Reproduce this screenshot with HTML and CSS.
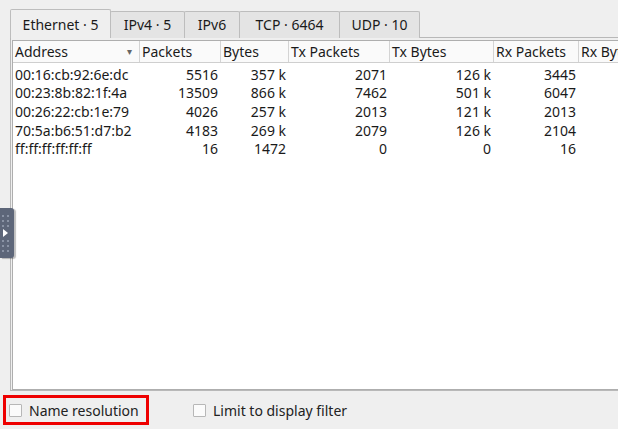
FILE: index.html
```html
<!DOCTYPE html>
<html>
<head>
<meta charset="utf-8">
<link rel="stylesheet" href="styles.css">
</head>
<body>
<div class="app">
  <div class="tabs">
    <div class="tab active">Ethernet · 5</div>
    <div class="tab w-ipv4">IPv4 · 5</div>
    <div class="tab w-ipv6">IPv6</div>
    <div class="tab w-tcp">TCP · 6464</div>
    <div class="tab w-udp">UDP · 10</div>
  </div>
  <div class="pane">
    <div class="view">
      <div class="row head">
        <div class="c c1">Address<span class="sort">▾</span></div>
        <div class="c c2">Packets</div>
        <div class="c c3">Bytes</div>
        <div class="c c4">Tx Packets</div>
        <div class="c c5">Tx Bytes</div>
        <div class="c c6">Rx Packets</div>
        <div class="c c7">Rx Bytes</div>
      </div>
      <div class="body">
        <div class="row"><div class="c c1">00:16:cb:92:6e:dc</div><div class="c c2 n">5516</div><div class="c c3 n">357 k</div><div class="c c4 n">2071</div><div class="c c5 n">126 k</div><div class="c c6 n">3445</div><div class="c c7 n">231 k</div></div>
        <div class="row"><div class="c c1">00:23:8b:82:1f:4a</div><div class="c c2 n">13509</div><div class="c c3 n">866 k</div><div class="c c4 n">7462</div><div class="c c5 n">501 k</div><div class="c c6 n">6047</div><div class="c c7 n">365 k</div></div>
        <div class="row"><div class="c c1">00:26:22:cb:1e:79</div><div class="c c2 n">4026</div><div class="c c3 n">257 k</div><div class="c c4 n">2013</div><div class="c c5 n">121 k</div><div class="c c6 n">2013</div><div class="c c7 n">136 k</div></div>
        <div class="row"><div class="c c1">70:5a:b6:51:d7:b2</div><div class="c c2 n">4183</div><div class="c c3 n">269 k</div><div class="c c4 n">2079</div><div class="c c5 n">126 k</div><div class="c c6 n">2104</div><div class="c c7 n">143 k</div></div>
        <div class="row"><div class="c c1">ff:ff:ff:ff:ff:ff</div><div class="c c2 n">16</div><div class="c c3 n">1472</div><div class="c c4 n">0</div><div class="c c5 n">0</div><div class="c c6 n">16</div><div class="c c7 n">1472</div></div>
      </div>
    </div>
  </div>
  <div class="handle">
    <svg width="14" height="50" viewBox="0 0 14 50">
      <g fill="#8a93a5">
        <rect x="2" y="7" width="2" height="2"/><rect x="7" y="7" width="2" height="2"/>
        <rect x="2" y="12" width="2" height="2"/><rect x="7" y="12" width="2" height="2"/>
        <rect x="2" y="17" width="2" height="2"/><rect x="7" y="17" width="2" height="2"/>
        <rect x="2" y="32" width="2" height="2"/><rect x="7" y="32" width="2" height="2"/>
        <rect x="2" y="37" width="2" height="2"/><rect x="7" y="37" width="2" height="2"/>
        <rect x="2" y="42" width="2" height="2"/><rect x="7" y="42" width="2" height="2"/>
      </g>
      <path d="M3 21 L8 25 L3 29 Z" fill="#ffffff"/>
    </svg>
  </div>
  <div class="bottom">
    <label class="check highlight"><span class="box"></span>Name resolution</label>
    <label class="check second"><span class="box"></span>Limit to display filter</label>
  </div>
</div>
</body>
</html>
```

FILE: styles.css
```css
html, body {
  margin: 0;
  padding: 0;
}
body {
  background: #efefef;
  font-family: "Noto Sans", "Open Sans", sans-serif;
  font-size: 14px;
  color: #1a1a1a;
  width: 618px;
  height: 429px;
  overflow: hidden;
}
.app {
  position: relative;
  width: 618px;
  height: 429px;
}
.tabs {
  display: flex;
  align-items: flex-end;
  padding: 8px 0 0 10px;
  height: 38px;
  box-sizing: border-box;
}
.tab {
  height: 27px;
  box-sizing: border-box;
  border: 1px solid #bdbdbd;
  border-bottom: none;
  background: #e4e4e4;
  border-radius: 2px 2px 0 0;
  display: flex;
  align-items: center;
  justify-content: center;
  margin-left: -1px;
  line-height: 1;
}
.tab.active {
  height: 29px;
  width: 101px;
  margin-left: 0;
  background: #efefef;
  position: relative;
  z-index: 1;
  padding-top: 2px;
}
.w-ipv4 { width: 75px; }
.w-ipv6 { width: 56px; }
.w-tcp { width: 101px; }
.w-udp { width: 81px; }
.pane {
  margin-left: 10px;
  margin-top: -1px;
  height: 354px;
  border: 1px solid #b8b8b8;
  border-right: none;
  box-sizing: border-box;
  padding: 2px 0 0 1px;
  background: #efefef;
}
.view {
  height: 350px;
  background: #ffffff;
  border: 1px solid #aeaeae;
  border-right: none;
  box-sizing: border-box;
  overflow: hidden;
}
.row {
  display: flex;
  white-space: nowrap;
  height: 18.6px;
  align-items: center;
}
.row.head {
  height: 21px;
  background: #fafafa;
  border-bottom: 1px solid #cfcfcf;
  margin-bottom: 2px;
}
.head .c {
  border-right: 1px solid #d4d4d4;
  height: 21px;
  display: flex;
  align-items: center;
  padding-left: 2px;
}
.c {
  box-sizing: border-box;
  flex: none;
  overflow: hidden;
  padding: 0 3px 0 2px;
}
.c1 { width: 127px; }
.c2 { width: 81px; }
.c3 { width: 68px; }
.c4 { width: 101px; }
.c5 { width: 104px; }
.c6 { width: 85px; }
.c7 { width: 80px; }
.n { text-align: right; }
.head .c1 { position: relative; }
.sort {
  position: absolute;
  right: 7px;
  top: 3px;
  font-size: 10px;
  color: #666;
}
.handle {
  position: absolute;
  left: 0;
  top: 208px;
  width: 14px;
  height: 50px;
  background: #5d6679;
  border-radius: 0 3px 3px 0;
  box-shadow: 2px 1px 1px rgba(0,0,0,0.25);
}
.handle svg { display: block; }
.bottom {
  display: flex;
  align-items: center;
  height: 38px;
  padding-left: 3px;
}
.check {
  display: flex;
  align-items: center;
  height: 30px;
  box-sizing: border-box;
  color: #222;
}
.check .box {
  width: 13px;
  height: 13px;
  border: 1px solid #b7b7b7;
  background: #fbfbfb;
  box-sizing: border-box;
  margin-right: 7px;
  border-radius: 1px;
}
.highlight {
  border: 3px solid #ee0000;
  width: 146px;
  padding-left: 3px;
}
.second {
  margin-left: 44px;
}
```
